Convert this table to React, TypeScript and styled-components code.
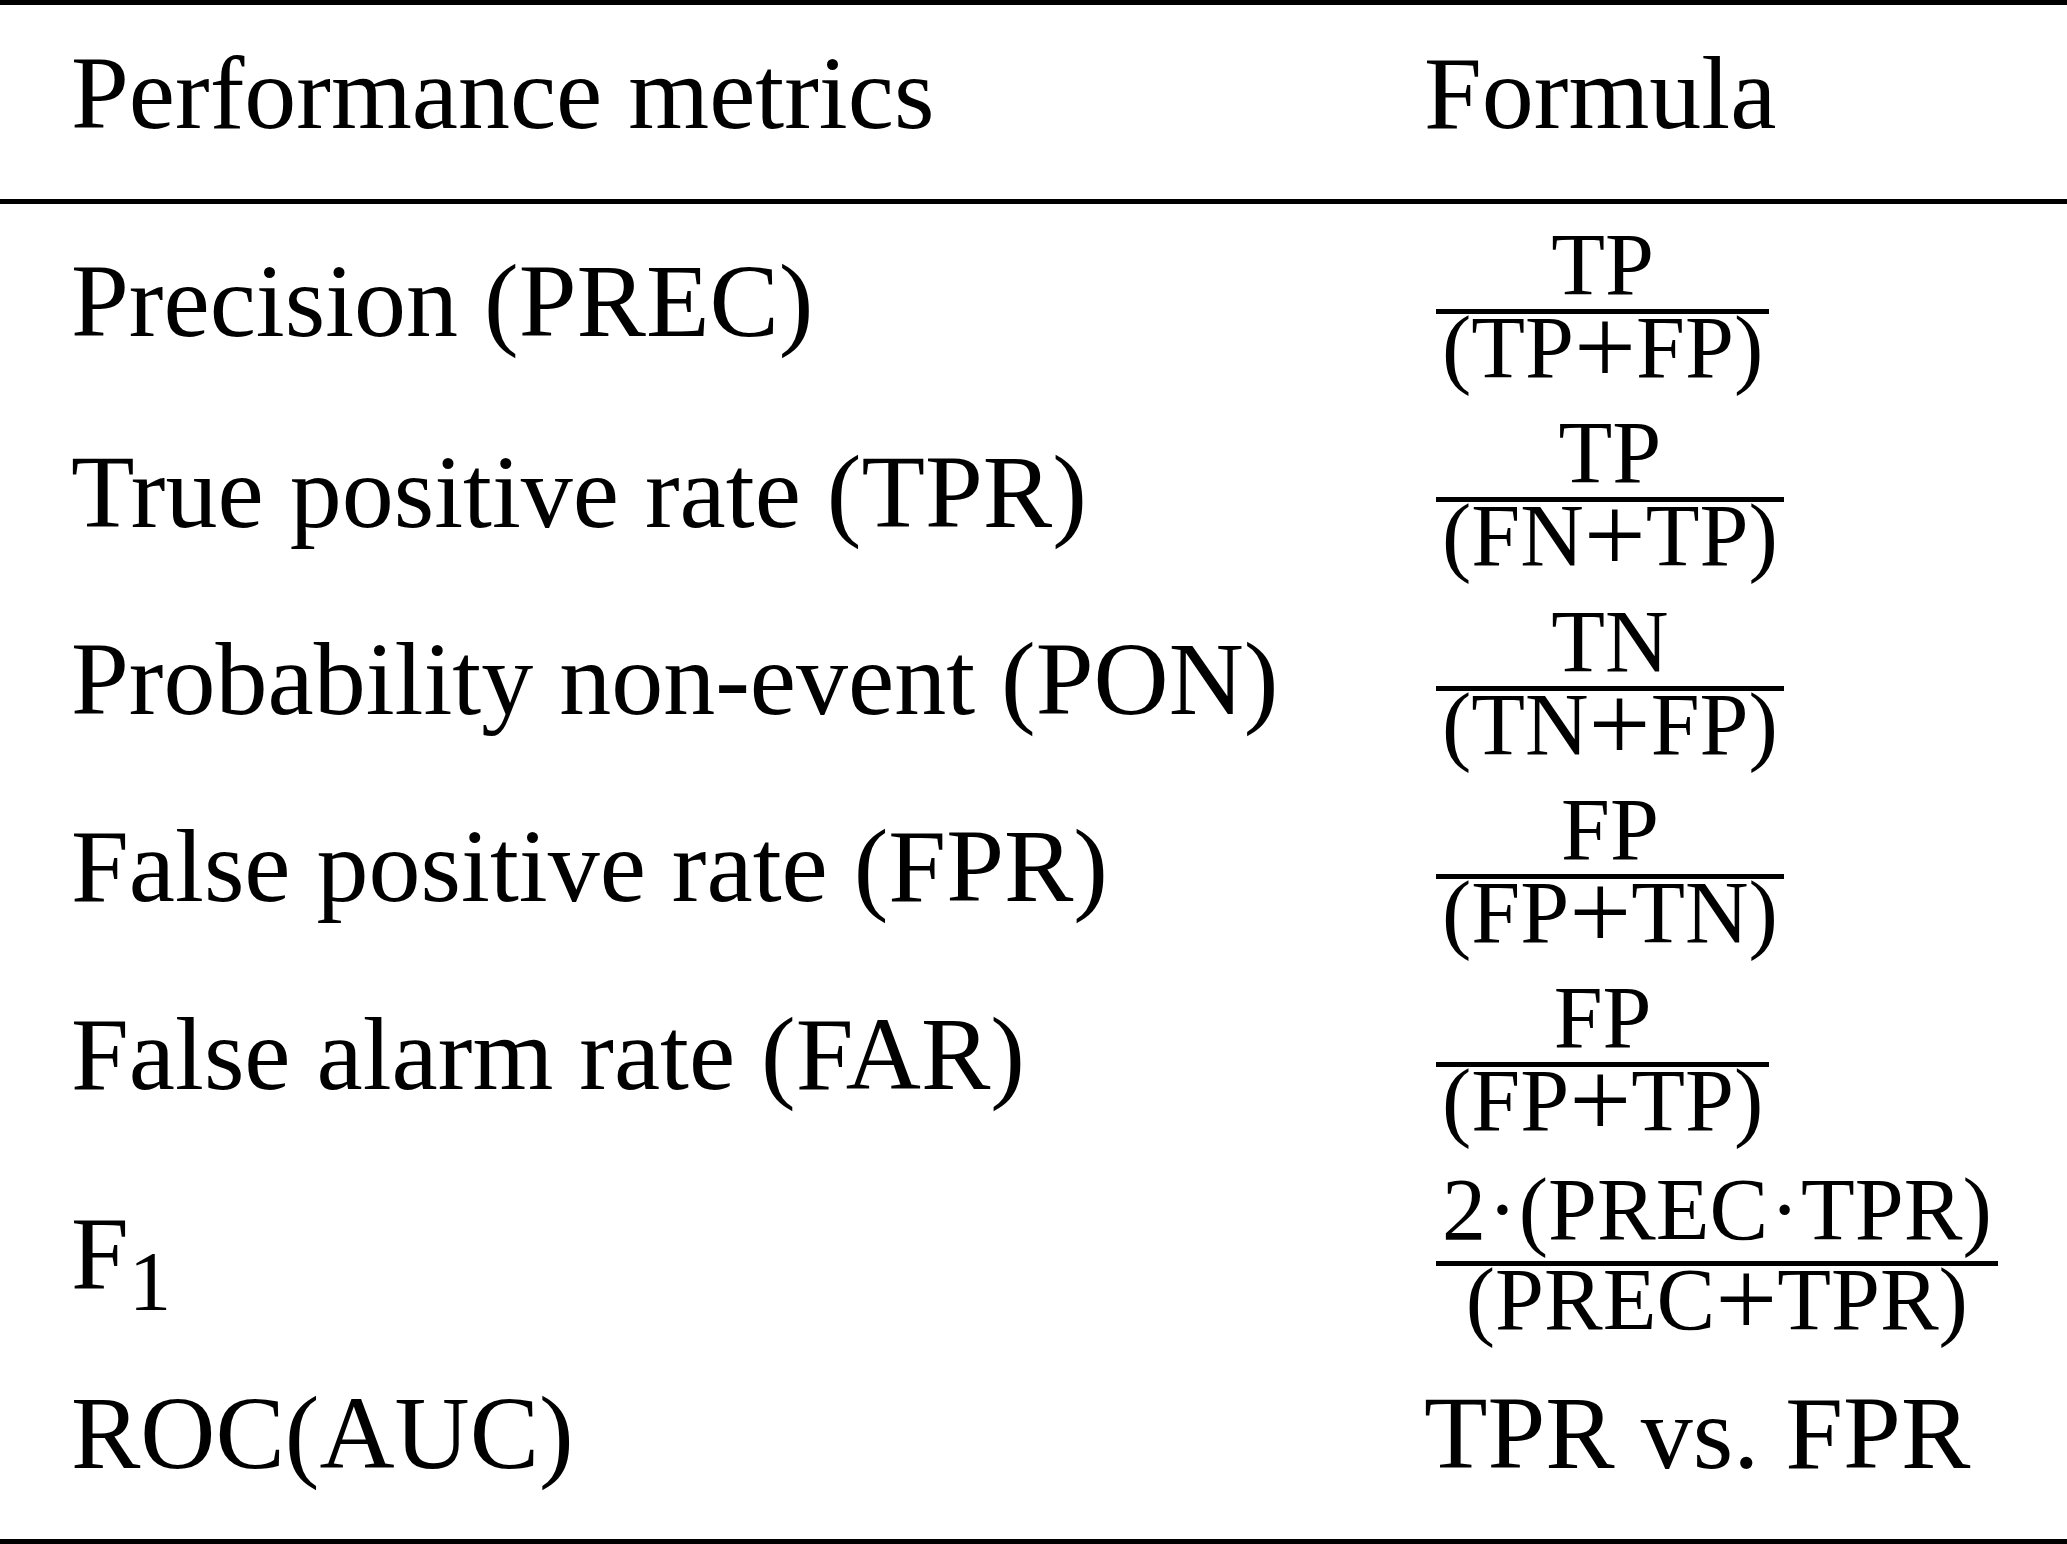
import React from "react";
import styled, { createGlobalStyle } from "styled-components";

const GlobalStyle = createGlobalStyle`
  html, body {
    margin: 0;
    padding: 0;
    background: #fff;
  }
  body {
    font-family: "Liberation Serif", "Times New Roman", serif;
    color: #000;
  }
`;

type Metric = {
  name: React.ReactNode;
  num?: React.ReactNode;
  den?: React.ReactNode;
  text?: string;
  height: number;
  lift?: number;
  numGap?: number;
};

const Table = styled.div`
  width: 100%;
  border-top: 5px solid #000;
  border-bottom: 5px solid #000;
`;

const Row = styled.div<{ $h: number }>`
  display: grid;
  grid-template-columns: 1353px 1fr;
  padding-left: 71px;
  align-items: baseline;
  height: ${(p) => p.$h}px;
  box-sizing: border-box;
`;

const HeadRow = styled(Row)`
  padding-top: 36px;
  border-bottom: 5px solid #000;
  box-sizing: content-box;
`;

const Body = styled.div`
  padding-top: 17px;
`;

const Cell = styled.div`
  font-size: 104px;
  line-height: 104px;
  white-space: nowrap;
`;

const Sub = styled.sub`
  font-size: 85px;
  line-height: 0;
  vertical-align: -22px;
`;

const Frac = styled.span<{ $lift: number }>`
  display: inline-flex;
  flex-direction: column;
  align-items: center;
  vertical-align: ${(p) => p.$lift}px;
  margin-left: 12px;
  font-size: 88px;
  line-height: 88px;
`;

const Num = styled.span<{ $gap: number }>`
  display: block;
  padding: 0 6px ${(p) => p.$gap}px;
`;

const Bar = styled.span`
  display: block;
  align-self: stretch;
  height: 5px;
  background: #000;
`;

const Den = styled.span`
  display: block;
  padding: 0 6px;
  line-height: 68px;
`;

const Op = styled.span`
  font-size: 1.25em;
  line-height: 0;
  vertical-align: -7px;
`;

const Dot = styled.span`
  margin: 0 0.02em;
`;

const metrics: Metric[] = [
  {
    name: "Precision (PREC)",
    num: "TP",
    den: <>(TP<Op>+</Op>FP)</>,
    height: 188,
    lift: 42,
  },
  {
    name: "True positive rate (TPR)",
    num: "TP",
    den: <>(FN<Op>+</Op>TP)</>,
    height: 189,
    lift: 45,
  },
  {
    name: "Probability non-event (PON)",
    num: "TN",
    den: <>(TN<Op>+</Op>FP)</>,
    height: 188,
    lift: 43,
  },
  {
    name: "False positive rate (FPR)",
    num: "FP",
    den: <>(FP<Op>+</Op>TN)</>,
    height: 188,
    lift: 42,
  },
  {
    name: "False alarm rate (FAR)",
    num: "FP",
    den: <>(FP<Op>+</Op>TP)</>,
    height: 192,
    lift: 42,
  },
  {
    name: <>F<Sub>1</Sub></>,
    num: <>2<Dot>·</Dot>(PREC<Dot>·</Dot>TPR)</>,
    den: <>(PREC<Op>+</Op>TPR)</>,
    height: 215,
    lift: 49,
    numGap: 7,
  },
  {
    name: "ROC(AUC)",
    text: "TPR vs. FPR",
    height: 158,
  },
];

const App: React.FC = () => {
  return (
    <>
      <GlobalStyle />
      <Table>
        <HeadRow $h={158}>
          <Cell>Performance metrics</Cell>
          <Cell>Formula</Cell>
        </HeadRow>
        <Body>
          {metrics.map((m, i) => (
            <Row $h={m.height} key={"metric_" + i}>
              <Cell>{m.name}</Cell>
              <Cell>
                {m.text ? (
                  m.text
                ) : (
                  <Frac $lift={m.lift ?? 42}>
                    <Num $gap={m.numGap ?? 0}>{m.num}</Num>
                    <Bar />
                    <Den>{m.den}</Den>
                  </Frac>
                )}
              </Cell>
            </Row>
          ))}
        </Body>
      </Table>
    </>
  );
};

export default App;
